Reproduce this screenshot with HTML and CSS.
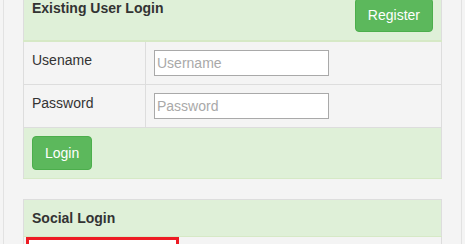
FILE: index.html
```html
<!DOCTYPE html>
<html lang="en">
<head>
  <meta charset="UTF-8" />
  <title>Login</title>
  <link rel="stylesheet" href="styles.css">
</head>
<body>

<div class="page">

  <table class="login-table">
    <thead>
      <tr class="success">
        <th colspan="2">
          <button class="btn btn-register">Register</button>
          Existing User Login
        </th>
      </tr>
    </thead>
    <tbody>
      <tr>
        <td class="label-cell">Usename</td>
        <td><input type="text" placeholder="Username"></td>
      </tr>
      <tr>
        <td class="label-cell">Password</td>
        <td><input type="password" placeholder="Password"></td>
      </tr>
    </tbody>
    <tfoot>
      <tr class="success">
        <td colspan="2"><button class="btn">Login</button></td>
      </tr>
    </tfoot>
  </table>

  <table class="login-table social">
    <thead>
      <tr class="success">
        <th>Social Login</th>
      </tr>
    </thead>
    <tbody>
      <tr>
        <td class="social-cell"><div class="social-btn"></div></td>
      </tr>
    </tbody>
  </table>

</div>

</body>
</html>
```

FILE: styles.css
```css
body {
  font-family: 'Liberation Sans', Arial, sans-serif;
  font-size: 14px;
  line-height: 20px;
  color: #333;
  background: #f4f4f4;
  margin: 0;
  overflow: hidden;
}
.page {
  margin: -11px 3px 0 3px;
  padding: 0 19px;
  border-left: 1px solid #e2e2e2;
  border-right: 1px solid #e2e2e2;
  min-height: 300px;
}
.login-table {
  width: 100%;
  border-collapse: collapse;
  margin-bottom: 20px;
}
.login-table th,
.login-table td {
  border: 1px solid #ddd;
  padding: 8px;
  text-align: left;
  vertical-align: top;
}
.login-table th {
  font-weight: bold;
}
.login-table thead th {
  border-bottom: 2px solid #d6e9c6;
}
.login-table tfoot td {
  border-bottom-color: #d6e9c6;
}
.success th,
.success td {
  background: #dff0d8;
}
.label-cell {
  width: 105px;
}
input {
  font-family: 'Liberation Sans', Arial, sans-serif;
  font-size: 14px;
  width: 175px;
  height: 26px;
  box-sizing: border-box;
  padding: 2px 2px;
  border: 1px solid #a9a9a9;
  margin: 0;
  display: block;
}
input::placeholder {
  color: #a9a9a9;
}
.btn {
  font-family: 'Liberation Sans', Arial, sans-serif;
  font-size: 14px;
  line-height: 20px;
  padding: 6px 12px;
  color: #fff;
  background: #5cb85c;
  border: 1px solid #4cae4c;
  border-radius: 4px;
  display: block;
}
.btn-register {
  float: right;
}
.social thead th {
  border-bottom: 1px solid #d6e9c6;
}
.social-cell {
  padding: 0 0 0 2px;
}
.social-cell.social-cell {
  padding: 0 0 0 2px;
}
.social-btn {
  width: 147px;
  height: 40px;
  border: 3px solid #ed1c24;
  background: #fff;
}
```
